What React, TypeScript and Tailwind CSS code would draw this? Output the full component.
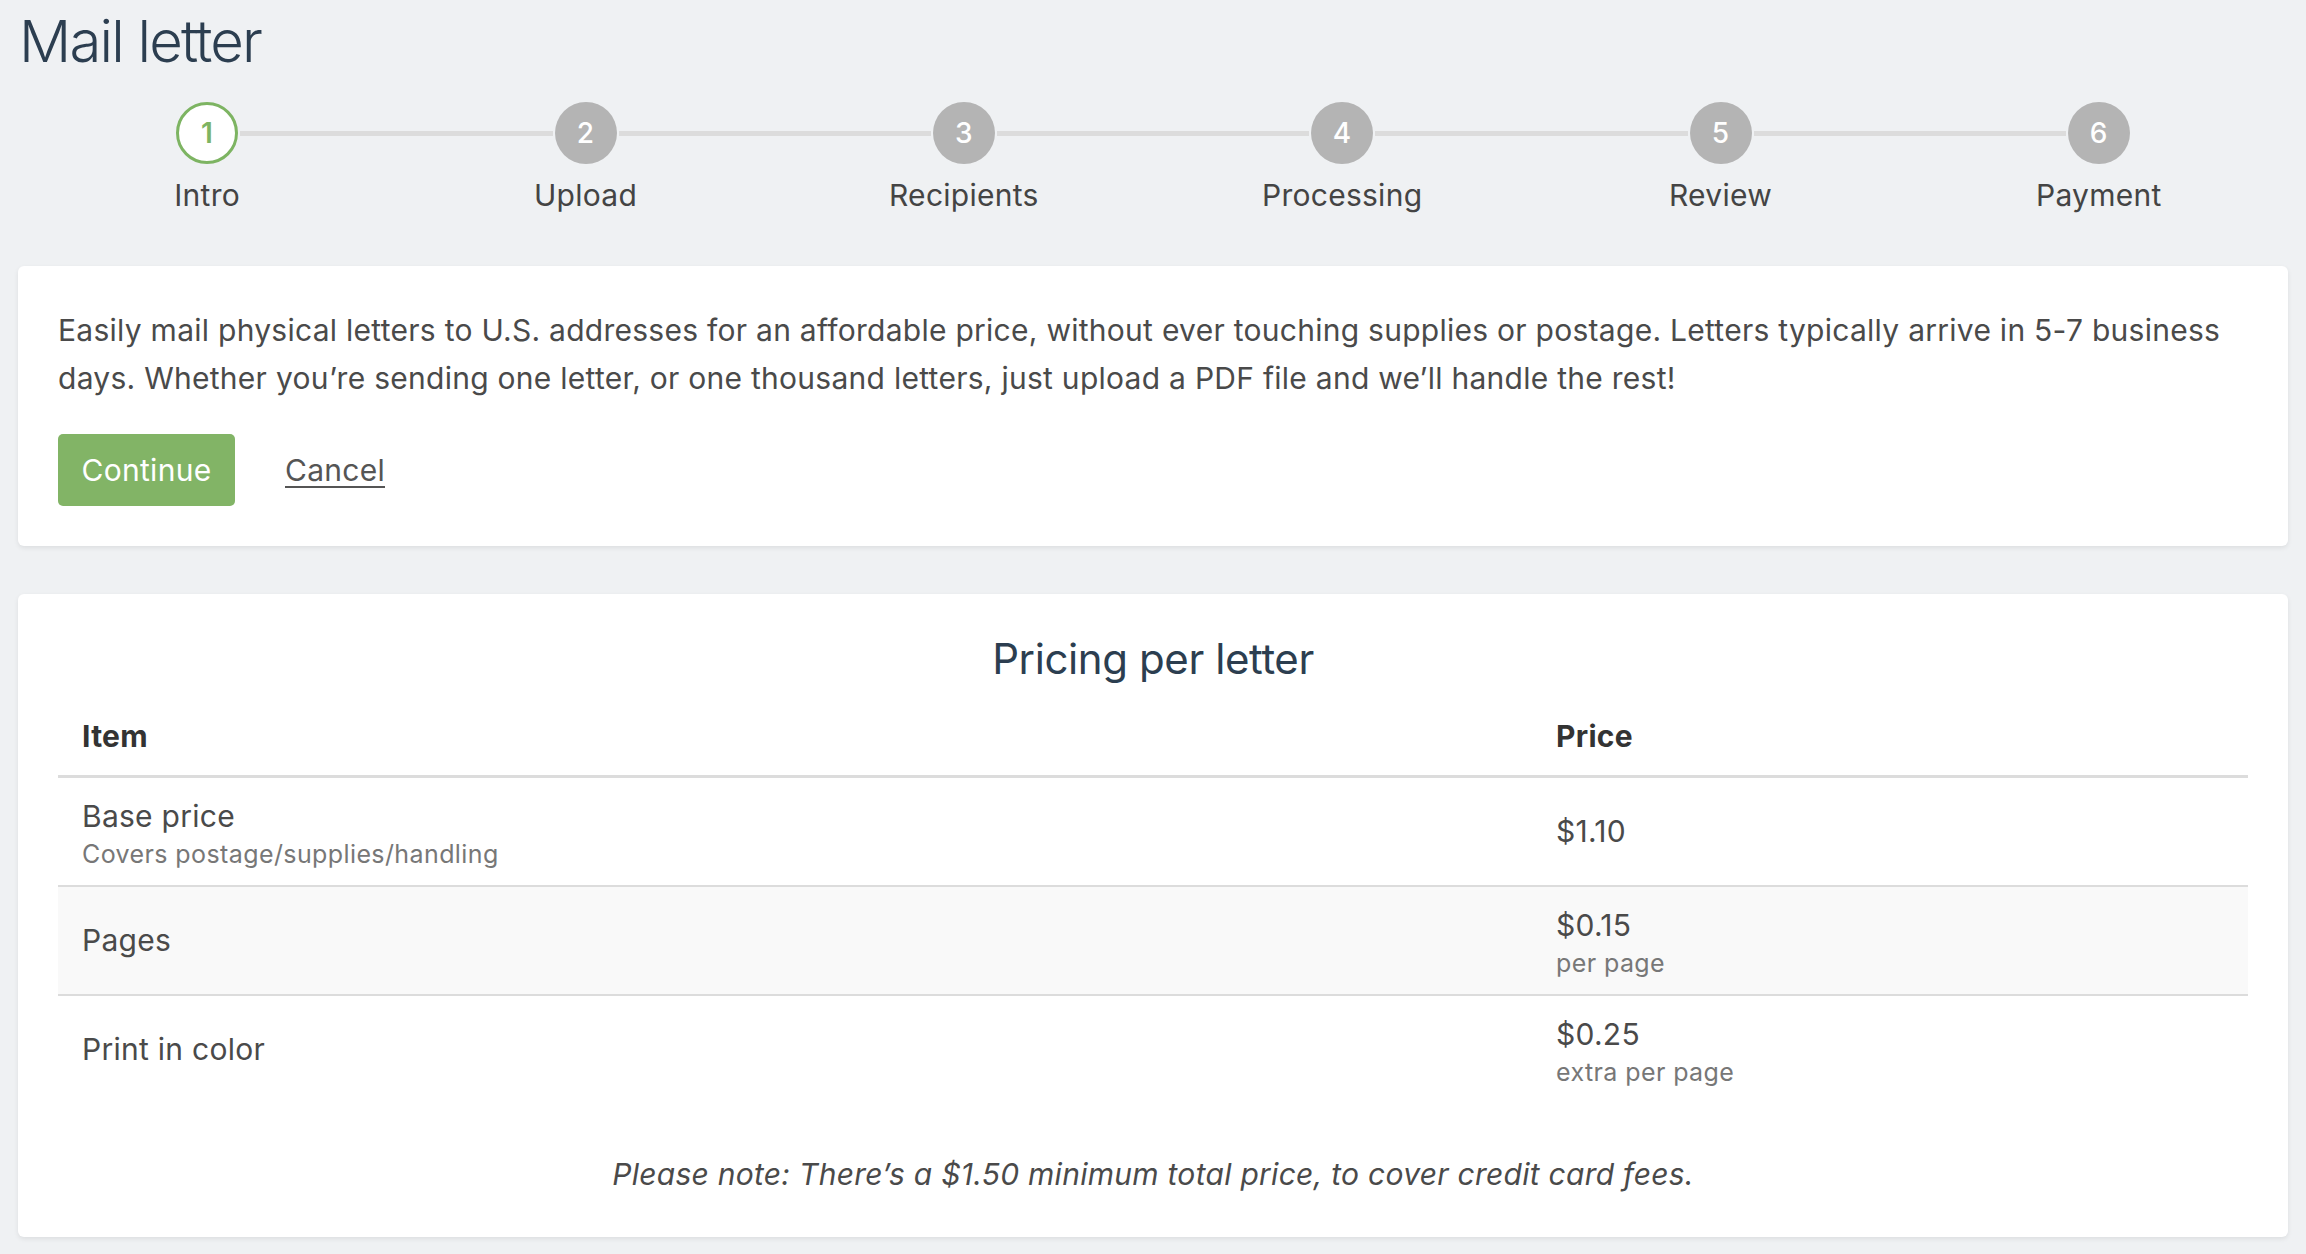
import React from "react";

const steps = ["Intro", "Upload", "Recipients", "Processing", "Review", "Payment"];

const rows = [
  { item: "Base price", note: "Covers postage/supplies/handling", price: "$1.10", sub: "" },
  { item: "Pages", note: "", price: "$0.15", sub: "per page" },
  { item: "Print in color", note: "", price: "$0.25", sub: "extra per page" },
];

const Stepper = () => (
  <div className="grid grid-cols-6 mt-[32px]">
    {steps.map((label, i) => (
      <div key={label} className="flex flex-col items-center">
        <div className="flex items-center w-full gap-[2px]">
          <div className={`flex-1 h-[5px] ${i === 0 ? "" : "bg-[#dcdcdc]"}`} />
          {i === 0 ? (
            <div className="w-[62px] h-[62px] rounded-full bg-white border-[3px] border-[#7db462] flex items-center justify-center text-[28px] font-semibold text-[#7db462]">
              1
            </div>
          ) : (
            <div className="w-[62px] h-[62px] rounded-full bg-[#b4b4b4] flex items-center justify-center text-[28px] font-medium text-white">
              {i + 1}
            </div>
          )}
          <div className={`flex-1 h-[5px] ${i === steps.length - 1 ? "" : "bg-[#dcdcdc]"}`} />
        </div>
        <div className="mt-[9px] text-[30px] leading-[45px] text-[#444]">{label}</div>
      </div>
    ))}
  </div>
);

export default function App() {
  return (
    <div className="min-h-screen bg-[#eff1f3] px-[18px] pt-[12px] pb-[20px] font-['Inter',sans-serif] tracking-[0.27px]">
      <h1 className="text-[58px] leading-[58px] font-light tracking-[-1.8px] text-[#2c3e50] pl-[1px]">Mail letter</h1>

      <Stepper />

      <div className="mt-[48px] bg-white rounded-[6px] shadow-[0_2px_5px_rgba(0,0,0,0.08)] p-[40px]">
        <p className="text-[30px] leading-[48px] text-[#4a4a4a]">
          Easily mail physical letters to U.S. addresses for an affordable price, without ever touching supplies or
          postage. Letters typically arrive in 5-7 business days. Whether you’re sending one letter, or one thousand
          letters, just upload a PDF file and we’ll handle the rest!
        </p>
        <div className="mt-[32px] flex items-center">
          <button className="w-[177px] h-[72px] rounded-[5px] bg-[#82b466] text-white text-[30px]">Continue</button>
          <a className="ml-[50px] text-[30px] text-[#555] underline underline-offset-[5px] decoration-[2px]">Cancel</a>
        </div>
      </div>

      <div className="mt-[48px] bg-white rounded-[6px] shadow-[0_2px_5px_rgba(0,0,0,0.08)] p-[40px]">
        <h2 className="text-center text-[42px] leading-[50px] tracking-[-0.4px] text-[#2c3e50] mb-[14px]">
          Pricing per letter
        </h2>

        <div className="grid grid-cols-[1474px_1fr] border-b-[3px] border-[#dcdcdc] text-[30px] leading-[45px] font-bold text-[#333]">
          <div className="px-[24px] py-[16px]">Item</div>
          <div className="px-[24px] py-[16px]">Price</div>
        </div>

        {rows.map((r, i) => (
          <div
            key={r.item}
            className={`grid grid-cols-[1474px_1fr] items-center text-[#4a4a4a] ${i === 1 ? "bg-[#f9f9f9]" : ""} ${
              i < rows.length - 1 ? "border-b-[2px] border-[#dcdcdc]" : ""
            }`}
          >
            <div className="px-[24px] py-[16px]">
              <div className="text-[30px] leading-[45px]">{r.item}</div>
              {r.note && <div className="text-[25px] leading-[30px] tracking-[0.4px] text-[#777]">{r.note}</div>}
            </div>
            <div className="px-[24px] py-[16px]">
              <div className="text-[30px] leading-[45px]">{r.price}</div>
              {r.sub && <div className="text-[25px] leading-[30px] tracking-[0.4px] text-[#777]">{r.sub}</div>}
            </div>
          </div>
        ))}

        <p className="mt-[49px] text-center italic text-[30px] leading-[45px] text-[#4a4a4a]">
          Please note: There’s a $1.50 minimum total price, to cover credit card fees.
        </p>
      </div>
    </div>
  );
}
